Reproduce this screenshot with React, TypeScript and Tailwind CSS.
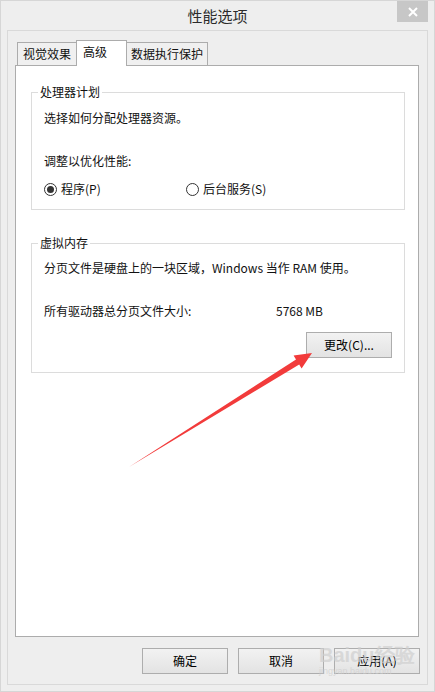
import type { ReactNode } from "react";

const font = "font-['Noto_Sans_CJK_SC','Noto_Sans',sans-serif]";

function Radio({ checked, label, className = "" }: { checked?: boolean; label: string; className?: string }) {
  return (
    <div className={`flex items-center gap-[4px] ${className}`}>
      <span className="flex h-[13px] w-[13px] items-center justify-center rounded-full border border-[#333333] bg-white">
        {checked ? <span className="h-[7px] w-[7px] rounded-full bg-[#333333]" /> : null}
      </span>
      <span>{label}</span>
    </div>
  );
}

function Group({ title, children, className = "" }: { title: string; children: ReactNode; className?: string }) {
  return (
    <fieldset className={`ml-[15px] w-[374px] border border-[#dcdcdc] pl-[12px] pr-[12px] ${className}`}>
      <legend className="-ml-[6px] px-[2px] leading-[16px]">{title}</legend>
      {children}
    </fieldset>
  );
}

function Button({ children, className = "" }: { children: ReactNode; className?: string }) {
  return (
    <button
      className={`flex h-[26px] w-[86px] items-center justify-center border border-[#adadad] bg-gradient-to-b from-[#f2f2f2] to-[#e3e3e3] text-[12px] text-black ${className}`}
    >
      {children}
    </button>
  );
}

export default function App() {
  return (
    <div className={`relative flex h-[692px] w-[435px] flex-col border border-[#d6d6d6] bg-[#eeeeee] text-[12px] leading-[16px] text-[#111111] ${font}`}>
      {/* title bar */}
      <div className="relative flex h-[29px] shrink-0 items-center justify-center">
        <span className="text-[15px] text-[#2b2b2b]">性能选项</span>
        <div className="absolute right-[6px] top-0 flex h-[21px] w-[31px] items-center justify-center bg-[#c7c7c7]">
          <svg width="10" height="10" viewBox="0 0 10 10">
            <path d="M1 1 L9 9 M9 1 L1 9" stroke="#ffffff" strokeWidth="2" />
          </svg>
        </div>
      </div>

      <div className="mx-[6px] mb-[6px] flex flex-1 flex-col border border-[#d9d9d9]">
        {/* tabs */}
        <div className="ml-[9px] mt-[9px] flex h-[25px] items-end">
          <div className="flex h-[23px] w-[60px] items-center justify-center border border-b-0 border-[#acacac] bg-[#f0f0f0]">
            视觉效果
          </div>
          <div className="relative z-10 -mb-px -ml-px flex h-[26px] w-[51px] items-start border border-b-0 border-[#acacac] bg-white pl-[6px] pt-[3px]">
            高级
          </div>
          <div className="-ml-px flex h-[23px] w-[82px] items-center justify-center border border-b-0 border-[#acacac] bg-[#f0f0f0]">
            数据执行保护
          </div>
        </div>

        {/* panel */}
        <div className="ml-[7px] h-[572px] w-[404px] border border-[#acacac] bg-white">
          <Group title="处理器计划" className="mt-[18px] pb-[12px]">
            <div className="pt-[10px]">选择如何分配处理器资源。</div>
            <div className="mt-[27px]">调整以优化性能:</div>
            <div className="mt-[12px] flex">
              <Radio checked label="程序(P)" className="w-[142px]" />
              <Radio label="后台服务(S)" />
            </div>
          </Group>

          <Group title="虚拟内存" className="mt-[25px] pb-[14px]">
            <div className="pt-[9px]">分页文件是硬盘上的一块区域，Windows 当作 RAM 使用。</div>
            <div className="mt-[27px] flex">
              <span className="w-[232px]">所有驱动器总分页文件大小:</span>
              <span>5768 MB</span>
            </div>
            <div className="mt-[13px] flex justify-end">
              <Button>更改(C)...</Button>
            </div>
          </Group>
        </div>

        {/* dialog buttons */}
        <div className="mr-[7px] mt-[11px] flex justify-end gap-[10px]">
          <Button>确定</Button>
          <Button>取消</Button>
          <Button>应用(A)</Button>
        </div>
      </div>

      {/* watermark */}
      <div className="pointer-events-none absolute left-[318px] top-[643px] flex flex-col items-start text-[#cfcfcf] opacity-70">
        <span className="font-['Liberation_Sans',sans-serif] text-[20px] font-bold leading-[22px]">Baidu经验</span>
        <span className="font-['Liberation_Sans',sans-serif] text-[9px] leading-[10px]">jingyan.baidu.com</span>
      </div>

      {/* pointer arrow */}
      <svg className="pointer-events-none absolute left-0 top-0" width="435" height="692" viewBox="0 0 435 692">
        <polygon
          points="128,466 295,358.4 292.6,354.6 311,352 300.6,367.4 298.2,363.5"
          fill="#f23b3b"
        />
      </svg>
    </div>
  );
}
